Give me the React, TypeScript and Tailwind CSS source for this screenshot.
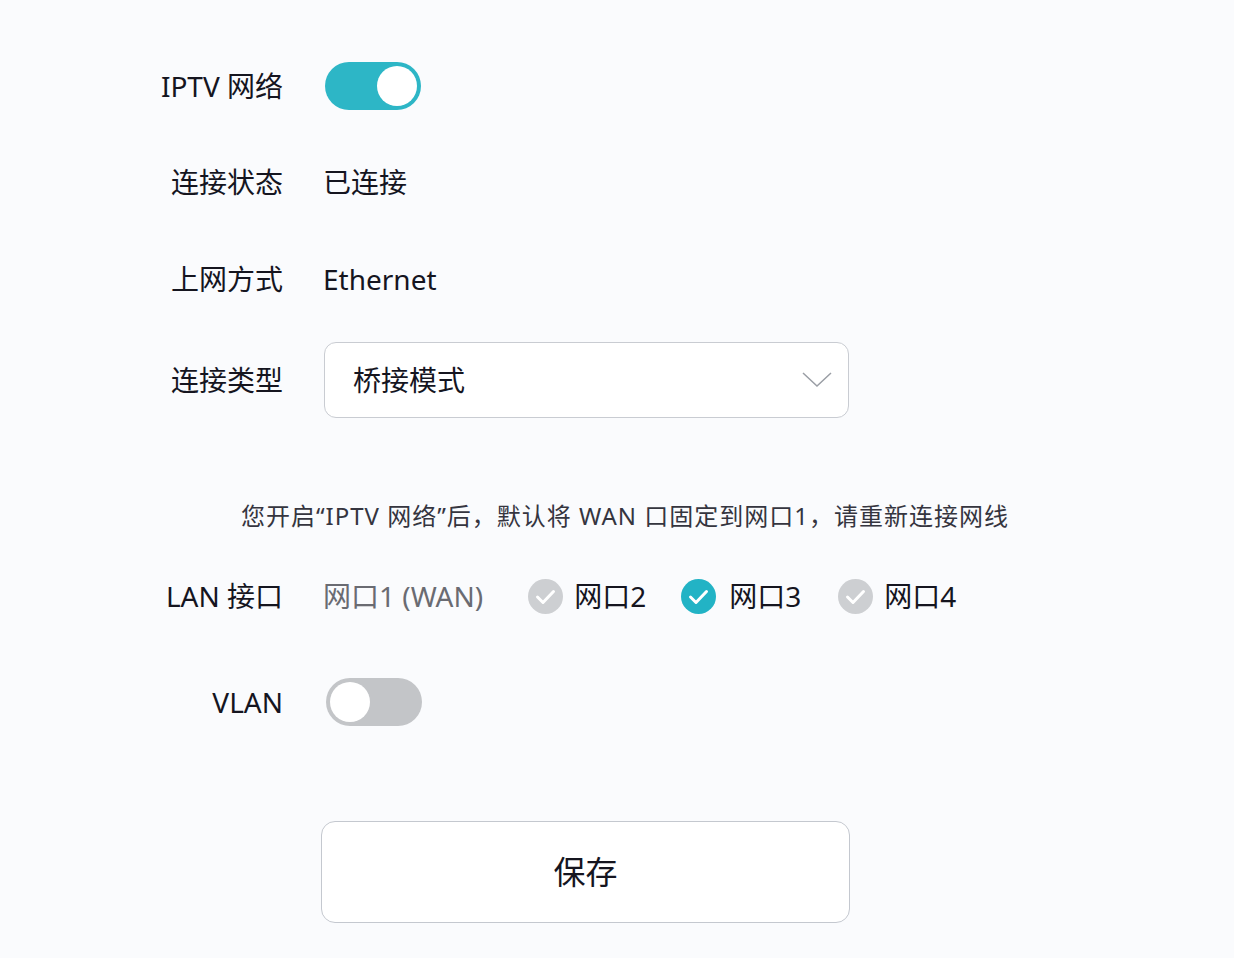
function Toggle({ on }: { on: boolean }) {
  return (
    <div
      className={
        "flex h-[48px] w-[96px] items-center rounded-full p-[4px] " +
        (on ? "justify-end bg-[#2db6c6]" : "justify-start bg-[#c3c5c8]")
      }
    >
      <div className="h-[40px] w-[40px] rounded-full bg-white" />
    </div>
  );
}

function Check({ on }: { on: boolean }) {
  return (
    <svg width="35" height="35" viewBox="0 0 35 35">
      <circle cx="17.5" cy="17.5" r="17.5" fill={on ? "#22b3c5" : "#cdcfd2"} />
      <path d="M9.5 18 L15 23.5 L25.5 12.5" fill="none" stroke="#fff" strokeWidth="3" strokeLinecap="round" strokeLinejoin="round" />
    </svg>
  );
}

function Row({ label, h, children }: { label: string; h: string; children: React.ReactNode }) {
  return (
    <div className={"flex items-center " + h}>
      <div className="w-[283px] shrink-0 text-right text-[28px] text-[#15151f]">{label}</div>
      <div className="ml-[40px] flex items-center">{children}</div>
    </div>
  );
}

export default function App() {
  return (
    <div
      className="min-h-[958px] w-[1234px] bg-[#fafbfd] pt-[38px]"
      style={{ fontFamily: '"Noto Sans", "Noto Sans CJK SC", sans-serif' }}
    >
      <Row label="IPTV 网络" h="h-[96px]">
        <div className="ml-[2px]">
          <Toggle on />
        </div>
      </Row>
      <Row label="连接状态" h="h-[96px]">
        <span className="text-[28px] text-[#15151f]">已连接</span>
      </Row>
      <Row label="上网方式" h="h-[98px]">
        <span className="text-[28px] text-[#15151f]">Ethernet</span>
      </Row>
      <Row label="连接类型" h="h-[104px]">
        <div className="ml-[1px] flex h-[76px] w-[525px] items-center justify-between rounded-[12px] border border-[#c9ccd2] bg-white pl-[28px] pr-[16px]">
          <span className="text-[28px] text-[#15151f]">桥接模式</span>
          <svg width="30" height="16" viewBox="0 0 30 16">
            <path d="M1 1 L15 14 L29 1" fill="none" stroke="#9a9ea5" strokeWidth="1.5" />
          </svg>
        </div>
      </Row>
      <div className="mt-[68px] pl-[241px] text-[24px] leading-[32px] tracking-[1px] text-[#35353f]">
        您开启“IPTV 网络”后，默认将 WAN 口固定到网口1，请重新连接网线
      </div>
      <Row label="LAN 接口" h="h-[112px] mt-[8px]">
        <span className="mr-[45px] text-[28px] text-[#6a6b72]">网口1 (WAN)</span>
        <div className="flex items-center gap-[11px]">
          <Check on={false} />
          <span className="text-[28px] text-[#15151f]">网口2</span>
        </div>
        <div className="ml-[35px] flex items-center gap-[13px]">
          <Check on />
          <span className="text-[28px] text-[#15151f]">网口3</span>
        </div>
        <div className="ml-[37px] flex items-center gap-[11px]">
          <Check on={false} />
          <span className="text-[28px] text-[#15151f]">网口4</span>
        </div>
      </Row>
      <Row label="VLAN" h="h-[100px]">
        <div className="ml-[3px]">
          <Toggle on={false} />
        </div>
      </Row>
      <div className="mt-[69px] pl-[321px]">
        <button className="flex h-[102px] w-[529px] items-center justify-center rounded-[14px] border border-[#c4c8cf] bg-white text-[32px] text-[#15151f]">
          保存
        </button>
      </div>
    </div>
  );
}
